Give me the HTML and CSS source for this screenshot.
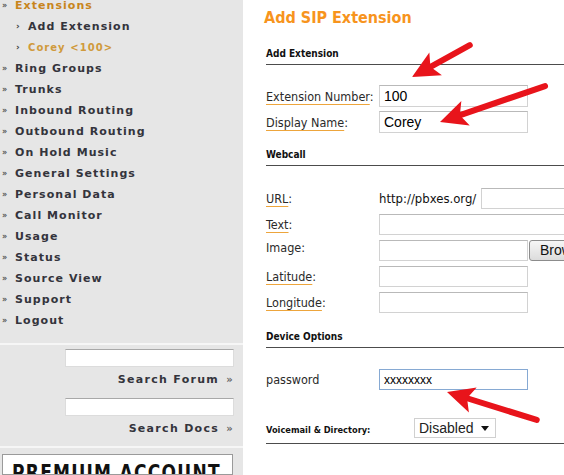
FILE: index.html
```html
<!DOCTYPE html>
<html>
<head>
<meta charset="utf-8">
<link rel="stylesheet" href="styles.css">
</head>
<body>
<div class="page">
  <aside class="sidebar">
    <ul class="menu">
      <li class="item active"><span class="bul">»</span>Extensions</li>
      <li class="sub"><span class="subbul">›</span>Add Extension</li>
      <li class="sub small"><span class="subbul">›</span>Corey &lt;100&gt;</li>
      <li class="item"><span class="bul">»</span>Ring Groups</li>
      <li class="item"><span class="bul">»</span>Trunks</li>
      <li class="item"><span class="bul">»</span>Inbound Routing</li>
      <li class="item"><span class="bul">»</span>Outbound Routing</li>
      <li class="item"><span class="bul">»</span>On Hold Music</li>
      <li class="item"><span class="bul">»</span>General Settings</li>
      <li class="item"><span class="bul">»</span>Personal Data</li>
      <li class="item"><span class="bul">»</span>Call Monitor</li>
      <li class="item"><span class="bul">»</span>Usage</li>
      <li class="item"><span class="bul">»</span>Status</li>
      <li class="item"><span class="bul">»</span>Source View</li>
      <li class="item"><span class="bul">»</span>Support</li>
      <li class="item"><span class="bul">»</span>Logout</li>
    </ul>
    <div class="search">
      <input class="sinput" type="text">
      <div class="slink">Search Forum <span class="raquo">»</span></div>
      <input class="sinput second" type="text">
      <div class="slink last">Search Docs <span class="raquo">»</span></div>
    </div>
    <div class="premium"><span class="premium-text">PREMIUM ACCOUNT</span></div>
  </aside>

  <main class="content">
    <h1 class="title">Add SIP Extension</h1>

    <h2 class="section first">Add Extension</h2>
    <div class="rows rows-ext">
      <label class="lbl"><span class="u">Extension Number</span>:</label>
      <input class="field val" type="text" value="100">
      <label class="lbl"><span class="u">Display Name</span>:</label>
      <input class="field val" type="text" value="Corey">
    </div>

    <h2 class="section">Webcall</h2>
    <div class="rows rows-web">
      <label class="lbl"><span class="u">URL</span>:</label>
      <div class="urlcell"><span class="prefix">http://pbxes.org/</span><input class="field wide" type="text"></div>
      <label class="lbl"><span class="u">Text</span>:</label>
      <input class="field wider" type="text">
      <label class="lbl top">Image:</label>
      <div class="filecell"><input class="field" type="text"><span class="browse">Browse...</span></div>
      <label class="lbl"><span class="u">Latitude</span>:</label>
      <input class="field" type="text">
      <label class="lbl"><span class="u">Longitude</span>:</label>
      <input class="field" type="text">
    </div>

    <h2 class="section third">Device Options</h2>
    <div class="rows rows-dev">
      <label class="lbl">password</label>
      <input class="field pw" type="text" value="xxxxxxxx">
    </div>
    <div class="vm-row">
      <span class="vm-label">Voicemail &amp; Directory:</span>
      <div class="select">Disabled<svg class="caret" width="8" height="5" viewBox="0 0 8 5"><path d="M0 0H8L4 5Z" fill="#111"/></svg></div>
    </div>
  </main>

  <svg class="arrows" width="564" height="475" viewBox="0 0 564 475">
    <g transform="translate(412 77) rotate(-28.9)">
      <line x1="16" y1="0" x2="66" y2="0" stroke="#e8141b" stroke-width="6" stroke-linecap="round"/>
      <path d="M0 0L27 -13L21 0L27 13Z" fill="#e8141b"/>
    </g>
    <g transform="translate(440 122) rotate(-18.9)">
      <line x1="16" y1="0" x2="111" y2="0" stroke="#e8141b" stroke-width="6" stroke-linecap="round"/>
      <path d="M0 0L27 -13L21 0L27 13Z" fill="#e8141b"/>
    </g>
    <g transform="translate(447 392) rotate(17.3)">
      <line x1="16" y1="0" x2="94" y2="0" stroke="#e8141b" stroke-width="6" stroke-linecap="round"/>
      <path d="M0 0L27 -13L21 0L27 13Z" fill="#e8141b"/>
    </g>
  </svg>
</div>
</body>
</html>
```

FILE: styles.css
```css
html, body {
  margin: 0;
  padding: 0;
  background: #ffffff;
}
.page {
  position: relative;
  width: 564px;
  height: 475px;
  overflow: hidden;
  display: flex;
}

/* Sidebar */
.sidebar {
  width: 243px;
  flex: none;
  background: #e6e6e6;
  display: flex;
  flex-direction: column;
}
.menu {
  list-style: none;
  margin: -5px 0 0 0;
  padding: 0 0 12px 0;
  border-bottom: 2px solid #f6f6f6;
}
.menu li {
  height: 21px;
  line-height: 21px;
  font-family: "DejaVu Sans", Verdana, sans-serif;
  font-weight: bold;
  font-size: 11px;
  letter-spacing: 1.05px;
  color: #34343c;
  white-space: nowrap;
}
.bul {
  display: inline-block;
  width: 13px;
  padding-left: 2px;
  font-size: 8px;
  letter-spacing: 0;
  color: #555;
  vertical-align: top;
}
.item.active {
  color: #c8851c;
}
.sub {
  padding-left: 15px;
  color: #c8851c;
}
.subbul {
  display: inline-block;
  width: 12px;
  padding-left: 1px;
  font-size: 9px;
  letter-spacing: 0;
  color: #444;
  vertical-align: top;
}
.sub.small {
  font-size: 10px;
  color: #d09a3c;
}

.search {
  display: flex;
  flex-direction: column;
  align-items: flex-end;
  padding: 4px 9px 7px 0;
  border-bottom: 2px solid #f6f6f6;
}
.sinput {
  width: 169px;
  height: 18px;
  box-sizing: border-box;
  margin: 0;
  border: 1px solid #dcdcdc;
  border-top-color: #a8a8a8;
  background: #fff;
}
.sinput.second {
  margin-top: 8px;
}
.slink {
  height: 20px;
  line-height: 20px;
  margin-top: 3px;
  font-family: "DejaVu Sans", Verdana, sans-serif;
  font-weight: bold;
  font-size: 11px;
  letter-spacing: 1.3px;
  color: #34343c;
  white-space: nowrap;
}
.raquo {
  color: #666;
  font-size: 10px;
  margin-left: 2px;
}

.premium {
  margin: 6px 0 0 2px;
  width: 231px;
  height: 40px;
  box-sizing: border-box;
  border: 1px solid #9a9a9a;
  background: #fff;
  padding: 7px 0 0 9px;
  overflow: hidden;
}
.premium-text {
  display: inline-block;
  font-family: "DejaVu Sans Condensed", "DejaVu Sans", sans-serif;
  font-weight: bold;
  font-size: 22px;
  line-height: 22px;
  letter-spacing: 1.5px;
  color: #111;
  white-space: nowrap;
  transform: scaleX(0.86);
  transform-origin: left top;
}

/* Content */
.content {
  flex: 1;
  min-width: 0;
  padding-left: 23px;
  overflow: hidden;
}
.title {
  margin: 0 0 0 -2px;
  padding-top: 8px;
  height: 20px;
  line-height: 20px;
  font-family: "DejaVu Sans Condensed", "DejaVu Sans", sans-serif;
  font-weight: bold;
  font-size: 16px;
  color: #f7941d;
  white-space: nowrap;
}
.section {
  margin: 15px 0 0 0;
  padding-bottom: 3px;
  height: 14px;
  line-height: 14px;
  border-bottom: 1px solid #4c4c4c;
  font-family: "DejaVu Sans Condensed", "DejaVu Sans", sans-serif;
  font-weight: bold;
  font-size: 10px;
  color: #111;
  width: 400px;
}
.section.first {
  margin-top: 19px;
}
.section.third {
  margin-top: 17px;
}
.rows {
  display: grid;
  grid-template-columns: 113px auto;
  justify-items: start;
  align-items: center;
}
.rows-ext {
  margin-top: 20px;
  row-gap: 4px;
}
.rows-web {
  margin-top: 22px;
  row-gap: 5px;
}
.rows-dev {
  margin-top: 21px;
}
.lbl {
  font-family: "DejaVu Sans Condensed", "DejaVu Sans", sans-serif;
  font-size: 12.5px;
  color: #2a2a2a;
  white-space: nowrap;
}
.lbl.top {
  align-self: start;
}
.u {
  text-decoration: underline;
  text-decoration-color: #eda53c;
  text-underline-offset: 3px;
}
.field {
  width: 149px;
  height: 21px;
  box-sizing: border-box;
  margin: 0;
  border: 1px solid #d2d2d2;
  border-top-color: #b9b9b9;
  background: #fff;
  padding: 0 4px;
  font-family: "Liberation Sans", Arial, sans-serif;
  font-size: 14px;
  color: #000;
  outline: none;
}
.field.val {
  height: 22px;
}
.field.wide {
  width: 120px;
}
.field.wider {
  width: 240px;
}
.urlcell, .filecell {
  display: flex;
  align-items: center;
  white-space: nowrap;
}
.prefix {
  font-family: "DejaVu Sans Condensed", "DejaVu Sans", sans-serif;
  font-size: 13px;
  color: #111;
  margin-right: 5px;
}
.browse {
  flex: none;
  margin-left: 1px;
  height: 21px;
  box-sizing: border-box;
  line-height: 19px;
  padding: 0 8px 0 10px;
  border: 1px solid #8c8c8c;
  border-radius: 3px;
  background: linear-gradient(#f6f6f6, #dcdcdc);
  font-family: "Liberation Sans", Arial, sans-serif;
  font-size: 14px;
  color: #111;
}
.field.pw {
  border-color: #86a9d3;
  font-size: 12px;
  padding-left: 4px;
}
.vm-row {
  display: flex;
  align-items: center;
  margin-top: 28px;
  padding-bottom: 5px;
  border-bottom: 1px solid #4c4c4c;
  width: 400px;
}
.vm-label {
  width: 148px;
  flex: none;
  font-family: "DejaVu Sans Condensed", "DejaVu Sans", sans-serif;
  font-weight: bold;
  font-size: 9.2px;
  color: #111;
  white-space: nowrap;
  padding-top: 3px;
}
.select {
  width: 82px;
  height: 20px;
  box-sizing: border-box;
  border: 1px solid #d0d0d0;
  display: flex;
  align-items: center;
  justify-content: space-between;
  padding: 0 6px 0 4px;
  font-family: "Liberation Sans", Arial, sans-serif;
  font-size: 14px;
  color: #222;
}
.caret {
  display: block;
}

.arrows {
  position: absolute;
  left: 0;
  top: 0;
  pointer-events: none;
}
```
